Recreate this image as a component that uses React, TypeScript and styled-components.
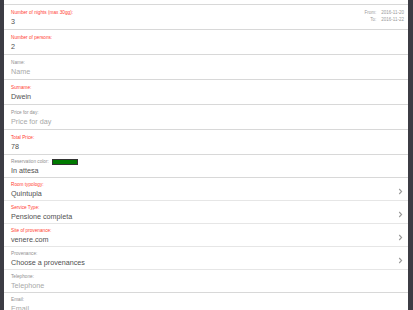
import React from 'react'
import styled, { createGlobalStyle } from 'styled-components'

const GlobalStyle = createGlobalStyle`
  html, body {
    margin: 0;
    padding: 0;
    background: #3c3c44;
  }
  body {
    font-family: "Liberation Sans", Arial, sans-serif;
  }
`

type Field = {
  label: string
  value: string
  required?: boolean
  placeholder?: boolean
  chevron?: boolean
  swatch?: string
}

const topFields: Field[] = [
  { label: 'Number of persons:', value: '2', required: true },
  { label: 'Name:', value: 'Name', placeholder: true },
  { label: 'Surname:', value: 'Dwein', required: true },
  { label: 'Price for day:', value: 'Price for day', placeholder: true },
  { label: 'Total Price:', value: '78', required: true },
]

const bottomFields: Field[] = [
  { label: 'Reservation color:', value: 'In attesa', swatch: '#007a00' },
  { label: 'Room typology:', value: 'Quintupla', required: true, chevron: true },
  { label: 'Service Type:', value: 'Pensione completa', required: true, chevron: true },
  { label: 'Site of provenance:', value: 'venere.com', required: true, chevron: true },
  { label: 'Provenance:', value: 'Choose a provenances', chevron: true },
  { label: 'Telephone:', value: 'Telephone', placeholder: true },
  { label: 'Email:', value: 'Email', placeholder: true },
]

const Chevron = () => (
  <svg width="5" height="7" viewBox="0 0 5 7">
    <path d="M1.2 1 L3.6 3.5 L1.2 6" fill="none" stroke="#9a9a9a" strokeWidth="1.1" />
  </svg>
)

const App = () => {
  return (
    <>
      <GlobalStyle />
      <Screen>
        <Panel>
          <TopStub />
          <Row>
            <Body>
              <Label $required>Number of nights (max 30gg):</Label>
              <Value>3</Value>
            </Body>
            <Dates>
              <DateLine><span>From:</span><span>2016-11-20</span></DateLine>
              <DateLine><span>To:</span><span>2016-11-22</span></DateLine>
            </Dates>
          </Row>
          {topFields.map((f) => (
            <Row key={f.label}>
              <Body>
                <Label $required={f.required}>{f.label}</Label>
                <Value $placeholder={f.placeholder}>{f.value}</Value>
              </Body>
            </Row>
          ))}
          {bottomFields.map((f) => (
            <CompactRow key={f.label} $select={f.chevron}>
              <Body>
                <Label $required={f.required}>
                  {f.label}
                  {f.swatch && <Swatch $color={f.swatch} />}
                </Label>
                <Value $placeholder={f.placeholder}>{f.value}</Value>
              </Body>
              {f.chevron && (
                <Arrow>
                  <Chevron />
                </Arrow>
              )}
            </CompactRow>
          ))}
        </Panel>
      </Screen>
    </>
  )
}
export default App

const Screen = styled.div`
  width: 413px;
  height: 310px;
  overflow: hidden;
  padding: 0 5px 0 4px;
  box-sizing: border-box;
  background: #3c3c44;
`

const Panel = styled.div`
  background: #ffffff;
  height: 100%;
  display: flex;
  flex-direction: column;
`

const TopStub = styled.div`
  height: 4px;
  flex-shrink: 0;
  border-bottom: 1px solid #d8d8d8;
`

const Row = styled.div`
  height: 25px;
  flex-shrink: 0;
  box-sizing: border-box;
  border-bottom: 1px solid #d8d8d8;
  display: flex;
  align-items: flex-start;
  padding: 4.5px 4px 0 7px;
`

const CompactRow = styled.div<{ $select?: boolean }>`
  height: 23px;
  flex-shrink: 0;
  box-sizing: border-box;
  border-bottom: ${(p) => (p.$select ? '1.5px solid #e6e6e6' : '1px solid #d8d8d8')};
  display: flex;
  align-items: flex-start;
  padding: 3.5px 5px 0 7px;
`

const Body = styled.div`
  flex: 1;
  display: flex;
  flex-direction: column;
  gap: 1px;
`

const Label = styled.div<{ $required?: boolean }>`
  font-size: 4.7px;
  line-height: 6px;
  height: 6px;
  color: ${(p) => (p.$required ? '#ff3b30' : '#8e8e8e')};
  display: flex;
  align-items: center;
`

const Value = styled.div<{ $placeholder?: boolean }>`
  font-size: 7.2px;
  line-height: 9px;
  color: ${(p) => (p.$placeholder ? '#a8a8a8' : '#505050')};
`

const Swatch = styled.span<{ $color: string }>`
  display: inline-block;
  width: 24px;
  height: 4px;
  margin-left: 3px;
  background: ${(p) => p.$color};
  border: 0.6px solid #333;
`

const Dates = styled.div`
  display: flex;
  flex-direction: column;
  align-items: flex-end;
  margin-top: -1px;
`

const DateLine = styled.div`
  display: flex;
  gap: 5px;
  font-size: 4.5px;
  line-height: 7.5px;
  color: #9a9a9a;
`

const Arrow = styled.div`
  align-self: center;
  display: flex;
  margin-top: 1px;
`
